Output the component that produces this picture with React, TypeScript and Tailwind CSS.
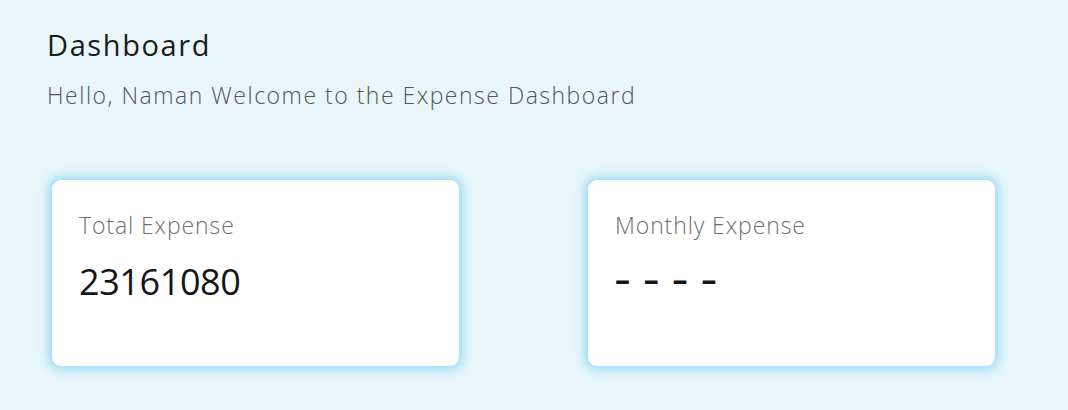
export default function App() {
  const cards = [
    { label: 'Total Expense', value: '23161080', dashes: false },
    { label: 'Monthly Expense', value: '– – – –', dashes: true },
  ]

  return (
    <div className="w-[1068px] h-[410px] bg-[#e9f7fb] overflow-hidden font-['Open_Sans',sans-serif]">
      <div className="pl-[47px] pt-[26px]">
        <h1 className="text-[29px] leading-[38px] font-medium text-[#1c1c1c] tracking-[1.6px]">Dashboard</h1>
        <p className="mt-[17px] text-[23px] leading-[28px] font-light text-[#555] tracking-[1.5px]">
          Hello, Naman Welcome to the Expense Dashboard
        </p>
      </div>

      <div className="flex gap-[129px] pl-[52px] mt-[71px]">
        {cards.map((card) => (
          <div
            key={card.label}
            className="w-[407px] h-[186px] bg-white rounded-[9px] shadow-[0_0_12px_3px_rgba(105,200,240,0.7)] pt-[30px] px-[27px]"
          >
            <div className="text-[23px] leading-[30px] font-light text-[#6f6f6f] tracking-[0.9px]">{card.label}</div>
            {card.dashes ? (
              <div className="mt-[19px] text-[30px] leading-[42px] font-bold text-[#151515] tracking-[3px]">{card.value}</div>
            ) : (
              <div className="mt-[21px] text-[36px] leading-[42px] text-[#151515] tracking-[-0.4px]">{card.value}</div>
            )}
          </div>
        ))}
      </div>
    </div>
  )
}
